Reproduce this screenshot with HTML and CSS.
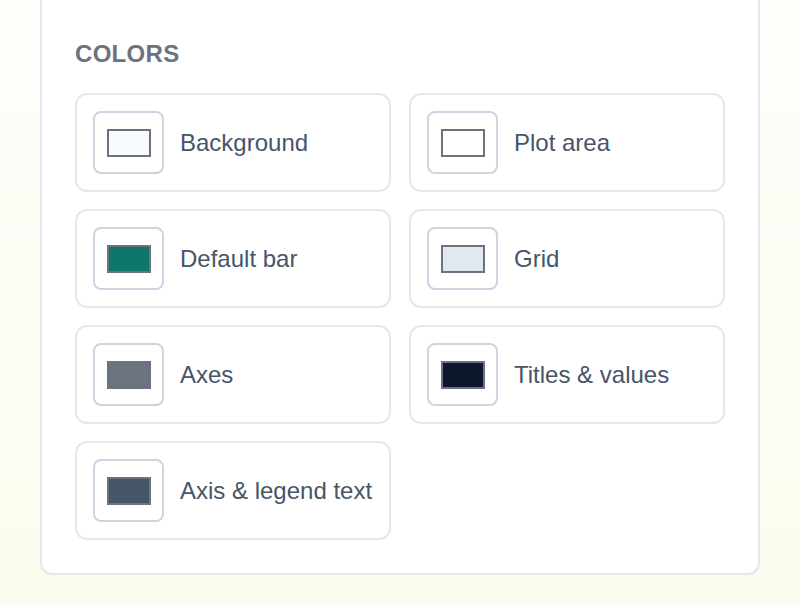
FILE: index.html
```html
<!DOCTYPE html>
<html lang="en">
<head>
  <meta charset="UTF-8">
  <title>Chart colors</title>
  <link rel="stylesheet" href="styles.css">
</head>
<body>

<div class="panel">
  <h2 class="section-title">Colors</h2>

  <div class="color-grid">
    <label class="color-field">
      <span class="swatch-box"><span class="swatch swatch-background"></span></span>
      <span class="color-name">Background</span>
    </label>
    <label class="color-field">
      <span class="swatch-box"><span class="swatch swatch-plot"></span></span>
      <span class="color-name">Plot area</span>
    </label>
    <label class="color-field">
      <span class="swatch-box"><span class="swatch swatch-bar"></span></span>
      <span class="color-name">Default bar</span>
    </label>
    <label class="color-field">
      <span class="swatch-box"><span class="swatch swatch-grid"></span></span>
      <span class="color-name">Grid</span>
    </label>
    <label class="color-field">
      <span class="swatch-box"><span class="swatch swatch-axes"></span></span>
      <span class="color-name">Axes</span>
    </label>
    <label class="color-field">
      <span class="swatch-box"><span class="swatch swatch-titles"></span></span>
      <span class="color-name">Titles &amp; values</span>
    </label>
    <label class="color-field">
      <span class="swatch-box"><span class="swatch swatch-legend"></span></span>
      <span class="color-name">Axis &amp; legend text</span>
    </label>
  </div>
</div>

</body>
</html>
```

FILE: styles.css
```css
html, body {
  height: 100%;
}
body {
  margin: 0;
  padding: 0 40px;
  font-family: "Liberation Sans", Arial, sans-serif;
  background: linear-gradient(#fefefb, #fbfbee);
}
.panel {
  background: #fff;
  border: 2px solid #e2e8f0;
  border-top: none;
  border-radius: 0 0 12px 12px;
  padding: 40px 33px 33px;
}
.section-title {
  margin: 0 0 25px;
  font-size: 24px;
  line-height: 28px;
  font-weight: bold;
  letter-spacing: 0.3px;
  text-transform: uppercase;
  color: #6b7280;
}
.color-grid {
  display: grid;
  grid-template-columns: 1fr 1fr;
  gap: 17px 18px;
}
.color-field {
  display: flex;
  align-items: center;
  gap: 16px;
  padding: 16px;
  border: 2px solid #e2e8f0;
  border-radius: 12px;
}
.swatch-box {
  display: flex;
  align-items: center;
  justify-content: center;
  width: 71px;
  height: 63px;
  box-sizing: border-box;
  border: 2px solid #cbd5e1;
  border-radius: 8px;
  background: #fff;
}
.swatch {
  width: 44px;
  height: 28px;
  box-sizing: border-box;
  border: 2px solid #6b7280;
}
.swatch-background { background: #f8fafc; }
.swatch-plot { background: #fff; }
.swatch-bar { background: #0f766e; }
.swatch-grid { background: #e2e8f0; }
.swatch-axes { background: #6b7280; }
.swatch-titles { background: #0f172a; }
.swatch-legend { background: #475569; }
.color-name {
  font-size: 24px;
  color: #475569;
}
```
